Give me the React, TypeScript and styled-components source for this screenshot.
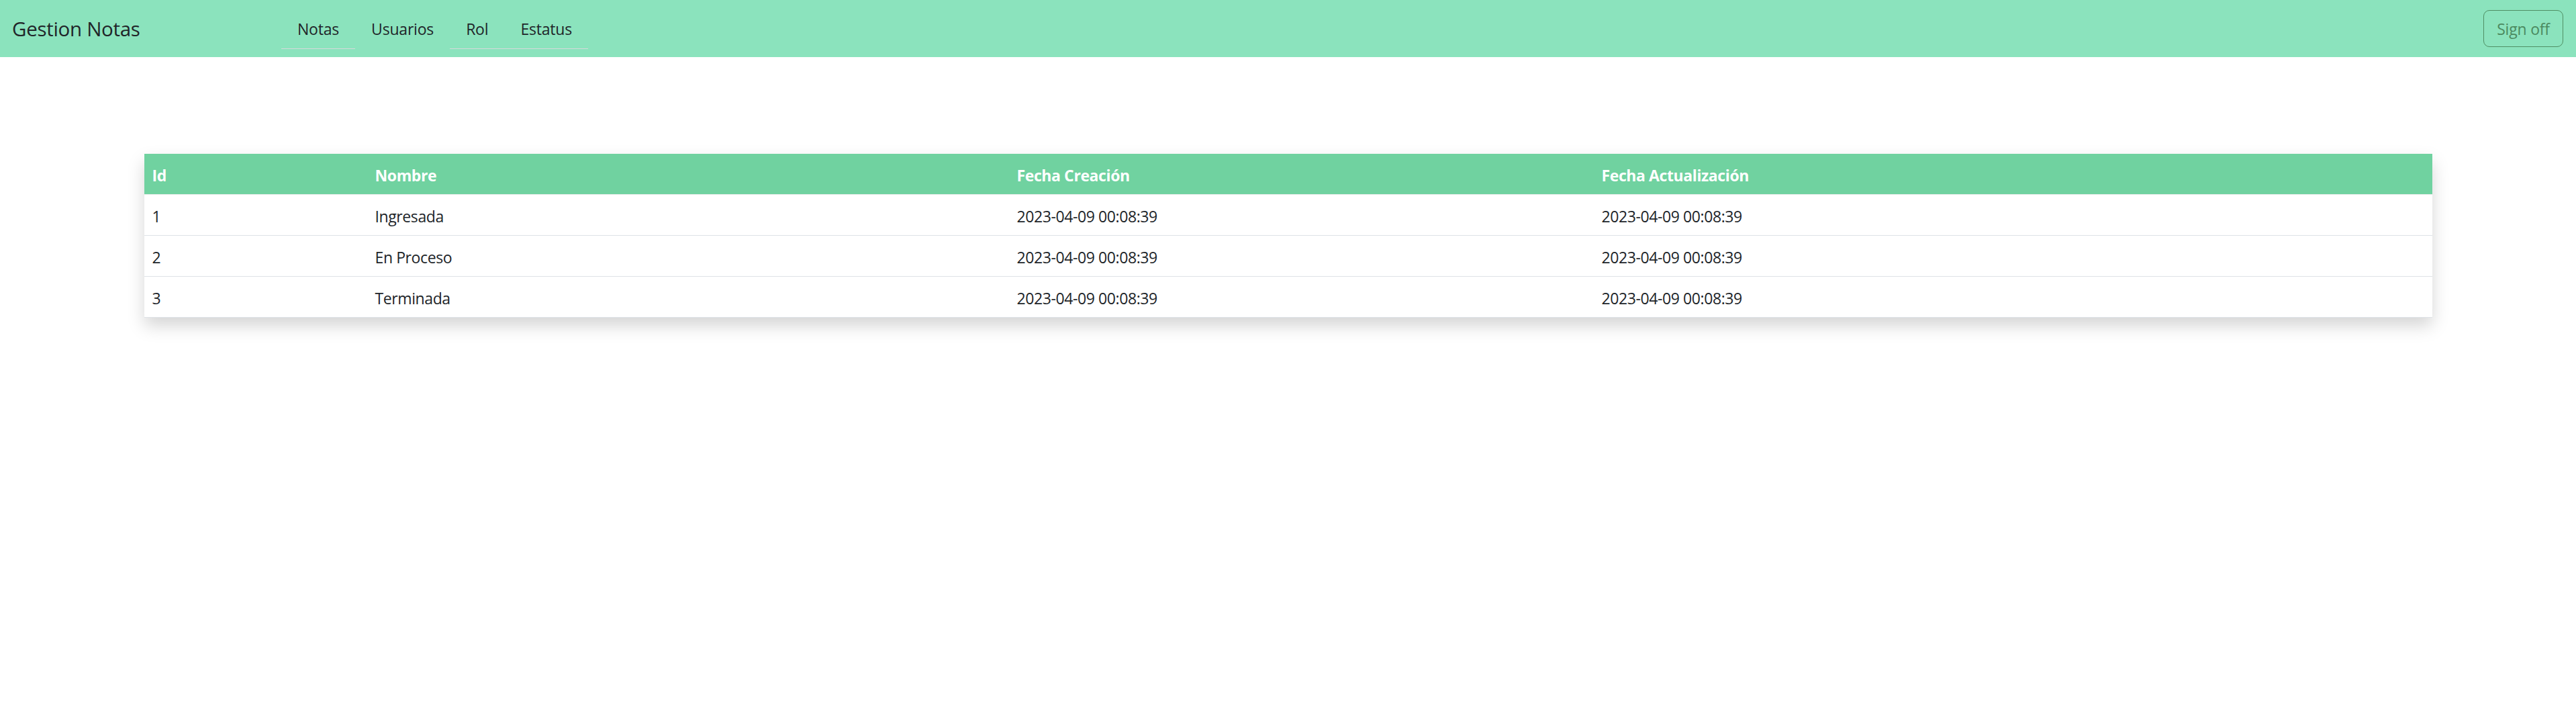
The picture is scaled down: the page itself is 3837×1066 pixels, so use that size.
import React from "react";
import styled, { createGlobalStyle } from "styled-components";

const GlobalStyle = createGlobalStyle`
  html, body {
    margin: 0;
    padding: 0;
    background: #ffffff;
    font-family: "Open Sans", "Noto Sans", "Liberation Sans", sans-serif;
    color: #212529;
  }
  * { box-sizing: border-box; }
`;

const NavBar = styled.nav`
  display: flex;
  align-items: center;
  height: 85px;
  padding: 12px 19px 12px 18px;
  background: #8be3bd;
`;

const Brand = styled.a`
  flex: 0 0 auto;
  width: 377px;
  margin-right: 24px;
  padding: 7px 0;
  font-size: 29.5px;
  line-height: 45px;
  color: #212529;
  text-decoration: none;
  letter-spacing: -0.3px;
`;

const NavList = styled.ul`
  display: flex;
  align-items: stretch;
  list-style: none;
  margin: 0;
  padding: 0;
  flex: 1 1 auto;
`;

const NavItem = styled.li<{ $underlined?: boolean }>`
  display: flex;
  border-bottom: 1px solid ${(p) => (p.$underlined ? "#d6dadb" : "transparent")};
`;

const NavLink = styled.a`
  display: block;
  padding: 12px 24px 11px;
  font-size: 23px;
  line-height: 36px;
  color: #212529;
  text-decoration: none;
  letter-spacing: -0.2px;
`;

const SignOff = styled.button`
  flex: 0 0 auto;
  width: 119px;
  height: 55px;
  padding: 0;
  font-family: inherit;
  font-size: 23px;
  line-height: 36px;
  color: #4b8a60;
  background: transparent;
  border: 1px solid #4f8f64;
  border-radius: 9px;
  letter-spacing: -0.2px;
`;

const Main = styled.main`
  padding: 144px 0 60px;
`;

const TableCard = styled.div`
  width: 3408px;
  margin: 0 auto;
  background: #ffffff;
  box-shadow: 0 12px 24px rgba(0, 0, 0, 0.17);
`;

const Table = styled.table`
  width: 100%;
  border-collapse: collapse;
  table-layout: fixed;
`;

const HeadRow = styled.tr`
  background: #70d2a0;
  border-bottom: 1px solid #e6ebe8;
`;

const HeadCell = styled.th<{ $w: number }>`
  width: ${(p) => p.$w}px;
  padding: 14px 12px 10px;
  height: 60px;
  text-align: left;
  font-size: 23px;
  line-height: 36px;
  font-weight: 700;
  color: #ffffff;
  letter-spacing: -0.4px;
`;

const BodyRow = styled.tr`
  border-bottom: 1px solid #dee2e6;
`;

const Cell = styled.td`
  padding: 14px 12px 10px;
  height: 60px;
  font-size: 23px;
  line-height: 36px;
  color: #212529;
  letter-spacing: -0.4px;
`;

const columns = [
  { label: "Id", w: 332 },
  { label: "Nombre", w: 956 },
  { label: "Fecha Creación", w: 871 },
  { label: "Fecha Actualización", w: 1249 },
];

const rows = [
  { id: 1, nombre: "Ingresada", creado: "2023-04-09 00:08:39", actualizado: "2023-04-09 00:08:39" },
  { id: 2, nombre: "En Proceso", creado: "2023-04-09 00:08:39", actualizado: "2023-04-09 00:08:39" },
  { id: 3, nombre: "Terminada", creado: "2023-04-09 00:08:39", actualizado: "2023-04-09 00:08:39" },
];

const links = [
  { label: "Notas", underlined: true },
  { label: "Usuarios", underlined: false },
  { label: "Rol", underlined: true },
  { label: "Estatus", underlined: true },
];

export default function App() {
  return (
    <>
      <GlobalStyle />
      <NavBar>
        <Brand href="#">Gestion Notas</Brand>
        <NavList>
          {links.map((l) => (
            <NavItem key={l.label} $underlined={l.underlined}>
              <NavLink href="#">{l.label}</NavLink>
            </NavItem>
          ))}
        </NavList>
        <SignOff type="button">Sign off</SignOff>
      </NavBar>
      <Main>
        <TableCard>
          <Table>
            <thead>
              <HeadRow>
                {columns.map((c) => (
                  <HeadCell key={c.label} $w={c.w}>
                    {c.label}
                  </HeadCell>
                ))}
              </HeadRow>
            </thead>
            <tbody>
              {rows.map((r) => (
                <BodyRow key={r.id}>
                  <Cell>{r.id}</Cell>
                  <Cell>{r.nombre}</Cell>
                  <Cell>{r.creado}</Cell>
                  <Cell>{r.actualizado}</Cell>
                </BodyRow>
              ))}
            </tbody>
          </Table>
        </TableCard>
      </Main>
    </>
  );
}
